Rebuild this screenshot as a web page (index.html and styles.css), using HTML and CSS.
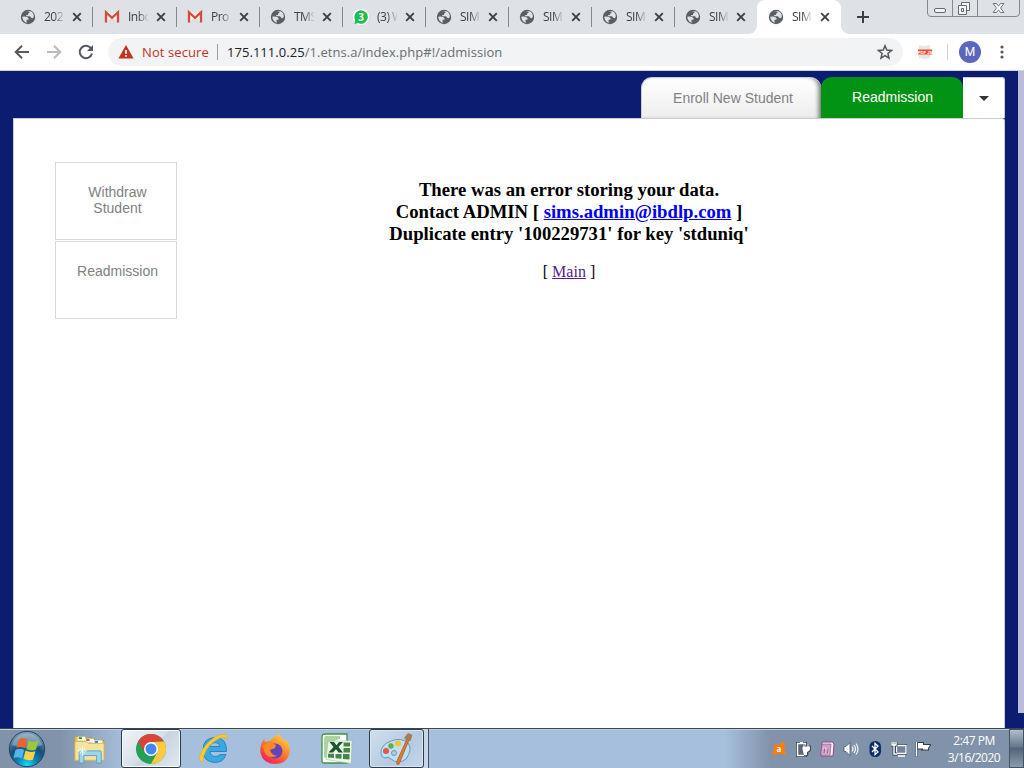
FILE: index.html
```html
<!DOCTYPE html>
<html lang="en">
<head>
<meta charset="utf-8">
<title>SIMS</title>
<link rel="stylesheet" href="styles.css">
</head>
<body>
<svg class="defs" width="0" height="0">
  <defs>
    <symbol id="globe" viewBox="0 0 16 16"><circle cx="8" cy="8" r="7.2" fill="#5b5f64"/><path d="M2.200 7.800q3-.6 5.300.5l1.300 1.400-.6 1H6.500v1.800l.8 1.300Q3 13.500 2.200 7.800zM6.500 2.600 9.600 2v1.600L8.200 4.600 8 6H6.200v1.200H10l1.200 1.600 1.600.4 1-1.500C14 5 12.500 3 10.600 2.300z" fill="#dfe2e6"/></symbol>
    <symbol id="x" viewBox="0 0 10 10"><path d="M1.200 1.200l7.600 7.600M8.800 1.200L1.200 8.800" stroke="#3c4043" stroke-width="1.900"/></symbol>
    <symbol id="gmail" viewBox="0 0 16 16"><path d="M2 3h12v10H2z" fill="#f1efee"/><path d="M3 13l5-5 5 5z" fill="#dfdddd"/><path d="M2 13.500V3.400L8 8.800l6-5.400v10.100" fill="none" stroke="#d54b3d" stroke-width="2.300"/></symbol>
    <symbol id="chat" viewBox="0 0 16 16"><circle cx="8" cy="8" r="8" fill="#fff"/><path d="M8 1.200a6.800 6.800 0 1 1-3 12.900L1.400 15l.9-3.600A6.800 6.800 0 0 1 8 1.200z" fill="#1bbd4b"/><text x="8" y="11.500" text-anchor="middle" class="badge">3</text></symbol>
  </defs>
</svg>
<header class="browser">
  <div class="tabstrip">
    <div class="tab first"><svg class="fav"><use href="#globe"/></svg><span class="label">202</span><svg class="close"><use href="#x"/></svg></div>
    <div class="tab"><svg class="fav"><use href="#gmail"/></svg><span class="label">Inbo</span><svg class="close"><use href="#x"/></svg></div>
    <div class="tab"><svg class="fav"><use href="#gmail"/></svg><span class="label">Pro</span><svg class="close"><use href="#x"/></svg></div>
    <div class="tab"><svg class="fav"><use href="#globe"/></svg><span class="label">TMS</span><svg class="close"><use href="#x"/></svg></div>
    <div class="tab"><svg class="fav"><use href="#chat"/></svg><span class="label">(3) W</span><svg class="close"><use href="#x"/></svg></div>
    <div class="tab"><svg class="fav"><use href="#globe"/></svg><span class="label">SIM</span><svg class="close"><use href="#x"/></svg></div>
    <div class="tab"><svg class="fav"><use href="#globe"/></svg><span class="label">SIM</span><svg class="close"><use href="#x"/></svg></div>
    <div class="tab"><svg class="fav"><use href="#globe"/></svg><span class="label">SIM</span><svg class="close"><use href="#x"/></svg></div>
    <div class="tab last"><svg class="fav"><use href="#globe"/></svg><span class="label">SIM</span><svg class="close"><use href="#x"/></svg></div>
    <div class="tab active"><svg class="fav"><use href="#globe"/></svg><span class="label">SIM</span><svg class="close"><use href="#x"/></svg></div>
    <svg class="newtab" viewBox="0 0 12 12"><path d="M6 0v12M0 6h12" stroke="#3c4043" stroke-width="2"/></svg>
    <svg class="winbtns" width="94" height="18" viewBox="0 0 94 18">
      <path d="M.5 0v13q0 3.500 3.500 3.500h85q3.500 0 3.500-3.500V0M25.500 0v16M50.500 0v16" fill="none" stroke="#85898e"/>
      <rect x="7.500" y="8.500" width="11" height="4" rx="1.500" fill="#f4f5f6" stroke="#666a70"/>
      <path d="M34.500 2.500h8v8h-8z" fill="#f4f5f6" stroke="#666a70"/><path d="M31.500 5.500h8v9h-8z" fill="#f4f5f6" stroke="#666a70"/><path d="M34.500 8.500h2v3h-2z" fill="none" stroke="#666a70"/>
      <path d="M66 3.500h3.500l2 2.500 2-2.500H77L73.500 8l3.500 4.500h-3.500l-2-2.500-2 2.500H66L69.500 8z" fill="#f4f5f6" stroke="#74787d"/>
    </svg>
  </div>
  <div class="toolbar">
    <svg class="nav" viewBox="0 0 16 16"><path d="M15 8H2.500M8 1.700L1.700 8 8 14.300" fill="none" stroke="#55595e" stroke-width="2"/></svg>
    <svg class="nav" viewBox="0 0 16 16"><path d="M1 8h12.500M8 1.700L14.300 8 8 14.300" fill="none" stroke="#b9bbbe" stroke-width="2"/></svg>
    <svg class="nav" viewBox="0 0 16 16"><path d="M13.200 4.600A6.200 6.200 0 1 0 14 9.500" fill="none" stroke="#55595e" stroke-width="2"/><path d="M15 1v6H9z" fill="#55595e"/></svg>
    <div class="omnibox">
      <svg class="warn" viewBox="0 0 16 14"><path d="M8 0l7.600 13.500H.4z" fill="#c5321f"/><path d="M8 5v3.800M8 10v1.800" stroke="#fff" stroke-width="1.700"/></svg>
      <span class="notsecure">Not secure</span>
      <span class="bar"></span>
      <span class="url"><b>175.111.0.25</b>/1.etns.a/index.php#!/admission</span>
      <svg class="star" viewBox="0 0 16 16"><path d="M8 1.800l1.800 4.300 4.700.4-3.600 3 1.100 4.600L8 11.600 4 14.100l1.100-4.600-3.600-3 4.700-.4z" fill="none" stroke="#55595e" stroke-width="1.500"/></svg>
    </div>
    <svg class="pdf" viewBox="0 0 16 16"><path d="M2 1l5 1 6-1v13l-5 1-6-1z" fill="#e6e6e6"/><path d="M1 5.500h14v5H1z" fill="#ee4b32"/><text x="8" y="9.700" text-anchor="middle" class="pdftext">PDF JS</text></svg>
    <span class="toolsep"></span>
    <span class="avatar">M</span>
    <svg class="dots" viewBox="0 0 4 14"><circle cx="2" cy="2" r="1.600"/><circle cx="2" cy="7" r="1.600"/><circle cx="2" cy="12" r="1.600"/></svg>
  </div>
</header>
<main class="page">
  <div class="site">
    <nav class="sitetabs">
      <a class="enroll">Enroll New Student</a>
      <a class="readm">Readmission</a>
      <a class="more"><i></i></a>
    </nav>
    <section class="panel">
      <aside class="side">
        <a>Withdraw<br>Student</a>
        <a>Readmission</a>
      </aside>
      <div class="message">
        <h3>There was an error storing your data.<br>Contact ADMIN [ <a class="mail">sims.admin@ibdlp.com</a> ]<br>Duplicate entry '100229731' for key 'stduniq'</h3>
        <p>[ <a class="main">Main</a> ]</p>
      </div>
    </section>
  </div>
  <div class="scroll"></div>
</main>
<footer class="taskbar">
  <svg class="start" viewBox="0 0 38 38">
    <defs><radialGradient id="orb" cx=".5" cy=".95" r=".9"><stop offset="0" stop-color="#12e1fb"/><stop offset=".3" stop-color="#0d86b8"/><stop offset=".6" stop-color="#164e78"/><stop offset="1" stop-color="#7d9bb4"/></radialGradient></defs>
    <circle cx="19" cy="19" r="17.700" fill="url(#orb)" stroke="#244560"/><path d="M4 15a15.500 15.500 0 0 1 30 0q-14 6-30 0z" fill="#c9dbe7" opacity=".4"/>
    <path d="M11 9.500q4.500-2.500 8.300 0l-2.300 8.500q-4-2.200-8.500 0z" fill="#ee6428"/><path d="M20.500 10.500q4.500 2.500 10 .3L28 19.500q-5 2-9.500-.5z" fill="#9cc83c"/><path d="M7.500 19.800q4.500-2 8.600.3l-2.300 8.200q-4-2.200-8.300-.2z" fill="#56b5e8"/><path d="M17.600 20.500q4.600 2.500 9.800.7l-2.500 8.500q-5 1.500-9.500-.9z" fill="#fdd147"/>
  </svg>
  <div class="task explorer"><svg viewBox="0 0 34 32"><path d="M1 6V2.500h11l1 2h8l1 2h9l1 3V28H1z" fill="#e9c869" stroke="#bd9840"/><path d="M4 3h8v4H4zM12 5h9v4h-9zM20 7h10v4H20z" fill="#fff"/><path d="M5 3.500h3.500v2H5z" fill="#15a226"/><path d="M13 5.500h3.500v2H13z" fill="#dc4834"/><path d="M22 7.500h3.500v2H22z" fill="#1b86d3"/><path d="M1 8h12l2 2h17v18H1z" fill="#f5e3a0" stroke="#d3b45e"/><path d="M5.500 31V19.500Q5.500 18 7 18h20.500q1.500 0 1.500 1.500V31h-5v-8H10.500v8z" fill="#9dd5ec" stroke="#5f9fbe"/><path d="M9 13v10M4 18h10M6 15l6 6M12 15l-6 6" stroke="#fff" stroke-width=".9"/></svg></div>
  <div class="task open"><svg viewBox="0 0 32 32"><circle cx="16" cy="16" r="15" fill="#22a152"/><path d="M3 8.500A15 15 0 0 1 29 8.500L16 9 9.800 19.500z" fill="#d7443a"/><path d="M29 8.500A15 15 0 0 1 16 31l6.200-11.500L22 12l-6-3z" fill="#fcca40"/><circle cx="16" cy="16" r="7" fill="#fff"/><circle cx="16" cy="16" r="5.500" fill="#4487f0"/></svg></div>
  <div class="task ie"><svg viewBox="0 0 32 32"><path d="M28.500 18.500H12q.5 5 5.500 5 3 0 4.500-2h6q-2.500 8-11 8Q5 29 5 17T17 4.500q12 0 11.500 14zM12 13.500h10Q21.500 9.500 17 9.500t-5 4z" fill="#39a9e1" stroke="#1c79be" stroke-width=".8"/><path d="M4.500 29.500C-3.500 26 7 9 19 3q11-5 10 3.500Q27 2.500 20 6 6 14 4.500 29.500z" fill="#f9cb2f" stroke="#e6aa16" stroke-width=".6"/></svg></div>
  <div class="task firefox"><svg viewBox="0 0 32 32"><defs><linearGradient id="ff" x1=".9" y1="0" x2=".2" y2="1"><stop offset="0" stop-color="#ffe13c"/><stop offset=".5" stop-color="#ff7a2b"/><stop offset="1" stop-color="#ef1661"/></linearGradient></defs><path d="M20 1q2 4 5 6.500l2-1Q32 14 30.500 20 28 31 16 31 4 30.500 1.500 20 .5 12 5 6l1 3 5-1q4-5 9-7z" fill="url(#ff)"/><circle cx="16" cy="18" r="7.500" fill="#6444bd"/><path d="M3 13l8-4 6 3-1 3-5 2q1 5 7 6-8 3-12-3z" fill="#ff8922"/></svg></div>
  <div class="task excel"><svg viewBox="0 0 32 32"><path d="M4 1h22v29H3q-2 0-2-2V4q0-3 3-3z" fill="#fff" stroke="#3d943c" stroke-width="1.300"/><path d="M4 3h15v3Q9 7 6 20v6l-3-2V5z" fill="#aad59f"/><path d="M7 8.500l24-1-.7 23L5 26.500z" fill="#edf6ea" stroke="#8fb88d" stroke-width=".5"/><path d="M22.500 9.500H29v4h-6.500zM22.500 15H29v4.500h-6.500zM22 21h6.500v5.500L22 26zM14.500 21h6v4.800l-6-.6zM7 20.800h6V25l-6-.6z" fill="#468646"/><path d="M8.500 9H13l2.500 3.200L18 9h4l-4.500 5 4.500 5.500h-4.500L15 16.300l-3 3.200H7.500l5-5.500z" fill="#1b572b"/></svg></div>
  <div class="task open paint"><svg viewBox="0 0 34 34"><path d="M2 22Q1 13 12 9q10-4 17 2 5 6-2 16-8 6-15 0-3-3-6-1-3 0-4-4z" fill="#c2def2" stroke="#629ac6"/><circle cx="7" cy="19" r="3" fill="#e4583e"/><circle cx="12" cy="14" r="2.700" fill="#5ab343"/><circle cx="19" cy="11.500" r="3" fill="#f5c431"/><circle cx="15" cy="21" r="2.500" fill="#a9cdea" stroke="#6798be"/><path d="M28 7l2 1-10 24q-3 2-2-3z" fill="#e17d2b" stroke="#a95a1b" stroke-width=".8"/><path d="M25 6l4-5 4.500 2-2 6-4-.5z" fill="#a77c56"/></svg></div>
  <span class="stack"></span>
  <div class="tray">
    <svg viewBox="0 0 16 16"><path d="M3 3.500q4 .8 9-2.500l2 1-.6 6 1.600 4.500-2 1.500-4-1.500L4 14 .5 13l2.300-4.500z" fill="#ff7b0d"/><text x="8" y="10.500" text-anchor="middle" class="avast">a</text></svg>
    <svg viewBox="0 0 16 16"><path d="M2.500 2.500h8v12h-8z" fill="#71849b" stroke="#34414f" stroke-width="3"/><path d="M2.500 2.500h8v12h-8z" fill="#59697b" stroke="#fff" stroke-width="1.400"/><path d="M5 1h3v2H5z" fill="#fff"/><path d="M9 3v3M13 3v3M7 6h8v1.500q0 2.500-3 3v3H9" fill="#fff" stroke="#34414f" stroke-width="2.600"/><path d="M9 3v3M13 3v3M7.500 6h7v1.500q0 2.500-3 3v3H9" fill="#fff" stroke="#fff" stroke-width="1.100"/></svg>
    <svg viewBox="0 0 16 16"><path d="M3 1h10.500l1.500 2-1 12H2z" fill="#f8eef8" stroke="#8d4784"/><path d="M3 3h9l-1 11H1.500z" fill="#c9a2c9" stroke="#8d4784" stroke-width=".6"/><text x="7" y="12.500" text-anchor="middle" class="note">n</text></svg>
    <svg viewBox="0 0 16 16"><path d="M1 5.500h2l4-4v13l-4-4H1z" fill="#fff" stroke="#485767" stroke-width=".8"/><path d="M9 5.500q2 2.500 0 5M11 4q3 4 0 8M13 2.500q4 5.500 0 11" fill="none" stroke="#f4f7fa" stroke-width="1.200"/></svg>
    <svg viewBox="0 0 16 16"><rect x="2.500" y="0" width="11.500" height="16" rx="5.500" fill="#0b2e67"/><path d="M5 5l6 6-3 2.500v-11L11 5l-6 6" fill="none" stroke="#fff" stroke-width="1.300"/></svg>
    <svg viewBox="0 0 16 16"><path d="M5.500 4.500h10v8h-10z" fill="#71849b" stroke="#2f3c49" stroke-width="3"/><path d="M5.500 4.500h9.500v8H5.500zM7 15h7" fill="#71849b" stroke="#fff" stroke-width="1.300"/><path d="M1 1v3h4V1M3 4v9h3" fill="none" stroke="#2f3c49" stroke-width="2.800"/><path d="M1 1v3h4V1M3 1v12h3" fill="none" stroke="#fff" stroke-width="1.400"/></svg>
    <svg viewBox="0 0 16 16"><path d="M1.500 1v15M3 2h5v2h7l-2 3v1.500H7V7.500H3z" fill="#fff" stroke="#2f3c49" stroke-width="2"/><path d="M1.500 1v14.500" stroke="#fff" stroke-width="1.300"/><path d="M3 2h5v2h7l-2 3v1.500H8V7.500H3z" fill="#fff"/></svg>
  </div>
  <div class="clock"><span>2:47 PM</span><span>3/16/2020</span></div>
  <div class="desk"></div>
</footer>
</body>
</html>
```
FILE: styles.css
```css
* { box-sizing: border-box; }
body { margin: 0; width: 1024px; height: 768px; overflow: hidden; display: flex; flex-direction: column; background: #0c1c70; font-family: "Open Sans", "Noto Sans", sans-serif; }
svg { display: block; flex: none; }
.defs { position: absolute; }
.browser { height: 71px; flex: none; background: #fff; border-bottom: 1px solid #cfd2d4; }
.tabstrip { height: 34px; background: #dee1e6; display: flex; padding-left: 10px; }
.tab { width: 83px; height: 34px; flex: none; display: flex; align-items: center; padding-left: 10px; position: relative; }
.tab::after { content: ""; width: 1px; height: 20px; background: #85888c; margin-left: 10px; }
.tab.first { width: 84px; }
.tab.first::after { margin-left: 10px; }
.tab.last { width: 82px; }
.tab.last::after { visibility: hidden; }
.tab.active { background: #fff; border-radius: 8px 8px 0 0; width: 84px; padding-left: 11px; }
.tab.active::after { visibility: hidden; }
.tab.active::before { content: ""; position: absolute; left: -8px; right: -8px; bottom: 0; height: 8px; background: radial-gradient(circle at 0 0, transparent 7.500px, #fff 8px) left / 8px 8px no-repeat, radial-gradient(circle at 100% 0, transparent 7.500px, #fff 8px) right / 8px 8px no-repeat; }
.fav { width: 16px; height: 16px; }
.label { width: 20px; margin-left: 8px; white-space: nowrap; font-size: 12px; line-height: 18px; letter-spacing: -.5px; color: #3c4043; -webkit-mask-image: linear-gradient(90deg, #000 50%, transparent 105%); mask-image: linear-gradient(90deg, #000 50%, transparent 105%); }
.close { width: 10px; height: 10px; margin-left: 8px; }
.badge { font: bold 10px "Open Sans", sans-serif; fill: #fff; }
.newtab { width: 12px; height: 12px; margin: 11px 0 0 16px; }
.winbtns { margin-left: 58px; }
.toolbar { height: 36px; display: flex; align-items: center; padding-left: 14px; }
.nav { width: 16px; height: 16px; margin-right: 16px; }
.omnibox { width: 795px; height: 28px; border-radius: 14px; background: #f1f3f4; display: flex; align-items: center; padding-left: 10px; margin-left: -2px; font-size: 13px; letter-spacing: .045px; color: #6a6e73; white-space: nowrap; }
.warn { width: 16px; height: 14px; }
.notsecure { width: 67px; margin-left: 8px; color: #c5321f; letter-spacing: .1px; }
.bar { width: 1px; height: 16px; background: #9da0a4; margin: 0 9px 0 8px; }
.url { width: 650px; }
.url b { font-weight: 400; color: #202124; }
.star { width: 16px; height: 16px; }
.pdf { width: 16px; height: 16px; margin-left: 14px; }
.pdftext { font: bold 4.200px "Liberation Sans", sans-serif; fill: #fff; }
.toolsep { width: 1px; height: 16px; background: #cdd0d3; margin: 0 11px 0 14px; }
.avatar { width: 22px; height: 22px; border-radius: 50%; background: #5a67bf; color: #fff; font: 12px/22px Roboto, sans-serif; text-align: center; }
.dots { width: 4px; height: 14px; margin-left: 19px; fill: #55595e; }
.page { height: 657px; flex: none; display: flex; justify-content: space-between; background: #0c1c70; }
.site { width: 992px; margin-left: 13px; display: flex; flex-direction: column; }
.scroll { width: 6px; height: 642px; background: #b9bbd9; }
.sitetabs { height: 47px; padding-top: 6px; display: flex; justify-content: flex-end; font: 14px "Liberation Sans", Arial, sans-serif; text-align: center; }
.enroll { width: 180px; line-height: 41px; padding-left: 3px; border: 1px solid #ccc; border-width: 1px 0 0 1px; border-radius: 11px 11px 0 0; color: #818181; background: linear-gradient(#fff, #ededed); box-shadow: inset -5px 0 5px -3px #666; }
.readm { width: 142px; line-height: 40px; padding-left: 1px; background: #029314; color: #fff; border-radius: 11px 11px 0 0; }
.more { width: 42px; background: #fff; border: 1px solid #ccc; border-width: 1px 1px 0 0; border-radius: 0 3px 0 0; display: flex; justify-content: center; align-items: center; }
.more i { border: 5px solid transparent; border-top-color: #333; border-bottom: 0; margin-top: 0; }
.panel { flex: 1; background: #fff; border: 1px solid #ccc; border-bottom: 0; border-radius: 0 3px 0 0; display: flex; padding: 43px 0 0 41px; }
.side { width: 122px; display: flex; flex-direction: column; gap: 1px; font: 14px/16px "Liberation Sans", Arial, sans-serif; color: #818181; text-align: center; }
.side a { height: 78px; border: 1px solid #d8d8d8; padding: 21px 0 0 3px; }
.message { width: 640px; margin-left: 72px; padding-top: 17px; text-align: center; font-family: "Liberation Serif", "Times New Roman", serif; color: #000; }
.message h3 { margin: 0; font-size: 18.700px; line-height: 22px; }
.message p { margin: 17px 0 0; font-size: 16px; line-height: 20px; }
.mail { color: #00e; text-decoration: underline; }
.main { color: #551a8b; text-decoration: underline; }
.taskbar { height: 40px; flex: none; display: flex; align-items: center; border-top: 1px solid #3c4653; box-shadow: inset 0 1px #c2d0df; background: linear-gradient(90deg, #8093aa 0, #8093aa 60px, #a6bfdc 125px, #a6bfdc 725px, #8093aa 770px, #8093aa 100%); }
.start { width: 38px; height: 38px; margin-left: 8px; }
.task { height: 39px; display: flex; align-items: center; justify-content: center; }
.task svg { width: 32px; height: 32px; }
.explorer { width: 75px; padding-left: 12px; }
.open { width: 60px; border: 1px solid #303b48; border-radius: 3px; box-shadow: inset 0 0 0 1px #f8fbfe; background: linear-gradient(135deg, #f1f4f8, #d5dfe9 50%, #c7d4e1 51%, #e1e7ef); }
.ie { width: 65px; }
.firefox { width: 57px; }
.excel { width: 66px; padding-left: 2px; }
.paint { width: 55px; padding-right: 2px; background: linear-gradient(135deg, #d1dfed, #b4cae1 60%, #c4d7eb); box-shadow: inset 0 0 0 1px #d8e5f3; }
.paint svg { width: 34px; height: 34px; }
.stack { width: 5px; height: 39px; border-right: 1px solid #425165; background: #c5d6e9; }
.tray { margin-left: 342px; display: flex; gap: 8px; }
.tray svg { width: 16px; height: 16px; }
.avast { font: bold 8px "Open Sans", sans-serif; fill: #fff; }
.note { font: italic bold 12px "Liberation Serif", serif; fill: #7d2f78; stroke: #fff; stroke-width: .4px; }
.clock { width: 68px; margin-left: 9px; display: flex; flex-direction: column; text-align: center; font-size: 12px; line-height: 17px; letter-spacing: -.5px; color: #fff; }
.desk { width: 15px; height: 39px; margin-left: auto; border: 1px solid #445264; background: linear-gradient(#b1bdcb, #66788d 45%, #53657a 50%, #8b9bae); }
```
